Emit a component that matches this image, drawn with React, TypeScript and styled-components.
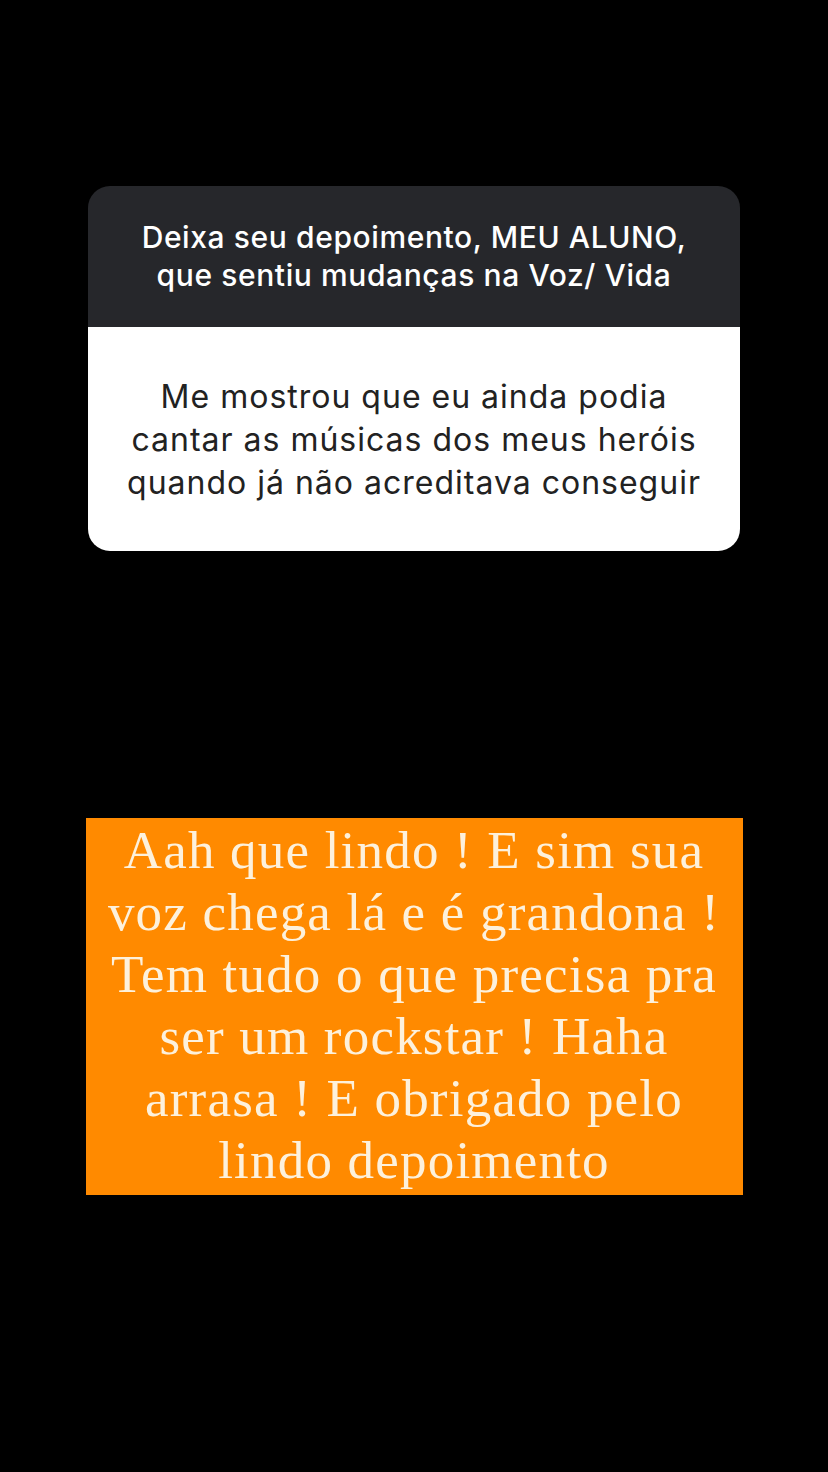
import React from "react";
import styled, { createGlobalStyle } from "styled-components";

const Global = createGlobalStyle`
  html, body { margin: 0; padding: 0; background: #000; }
  #root { min-height: 1472px; }
`;

const Page = styled.div`
  min-height: 1472px;
  background: #000;
  display: flex;
  flex-direction: column;
  align-items: center;
  padding-top: 186px;
  box-sizing: border-box;
`;

const Card = styled.div`
  width: 652px;
  border-radius: 22px;
  overflow: hidden;
  display: flex;
  flex-direction: column;
`;

const Header = styled.div`
  height: 141px;
  background: #26272b;
  color: #fff;
  display: flex;
  align-items: center;
  justify-content: center;
  text-align: center;
  font-family: Inter, "Noto Sans", sans-serif;
  font-weight: 500;
  font-size: 30px;
  line-height: 38px;
  letter-spacing: 0.6px;
  padding-bottom: 2px;
  box-sizing: border-box;
  white-space: nowrap;
`;

const Body = styled.div`
  height: 224px;
  background: #fff;
  color: #222;
  display: flex;
  align-items: center;
  justify-content: center;
  text-align: center;
  font-family: Inter, "Noto Sans", sans-serif;
  font-weight: 400;
  font-size: 32px;
  line-height: 43px;
  letter-spacing: 1px;
  box-sizing: border-box;
  white-space: nowrap;
`;

const Note = styled.div`
  margin-top: 267px;
  width: 657px;
  height: 377px;
  background: #ff8a00;
  color: #fdf1dc;
  display: flex;
  align-items: center;
  justify-content: center;
  text-align: center;
  font-family: "Liberation Serif", "DejaVu Serif", serif;
  font-size: 53px;
  line-height: 62px;
  letter-spacing: 1.2px;
  padding-bottom: 4px;
  box-sizing: border-box;
  white-space: nowrap;
`;

const lines = (arr: string[]) =>
  arr.map((l, i) => (
    <React.Fragment key={i}>
      {l}
      {i < arr.length - 1 && <br />}
    </React.Fragment>
  ));

export default function App() {
  return (
    <>
      <Global />
      <Page>
        <Card>
          <Header>
            <div>{lines(["Deixa seu depoimento, MEU ALUNO,", "que sentiu mudanças na Voz/ Vida"])}</div>
          </Header>
          <Body>
            <div>
              {lines([
                "Me mostrou que eu ainda podia",
                "cantar as músicas dos meus heróis",
                "quando já não acreditava conseguir",
              ])}
            </div>
          </Body>
        </Card>
        <Note>
          <div>
            {lines([
              "Aah que lindo ! E sim sua",
              "voz chega lá e é grandona !",
              "Tem tudo o que precisa pra",
              "ser um rockstar ! Haha",
              "arrasa ! E obrigado pelo",
              "lindo depoimento",
            ])}
          </div>
        </Note>
      </Page>
    </>
  );
}
